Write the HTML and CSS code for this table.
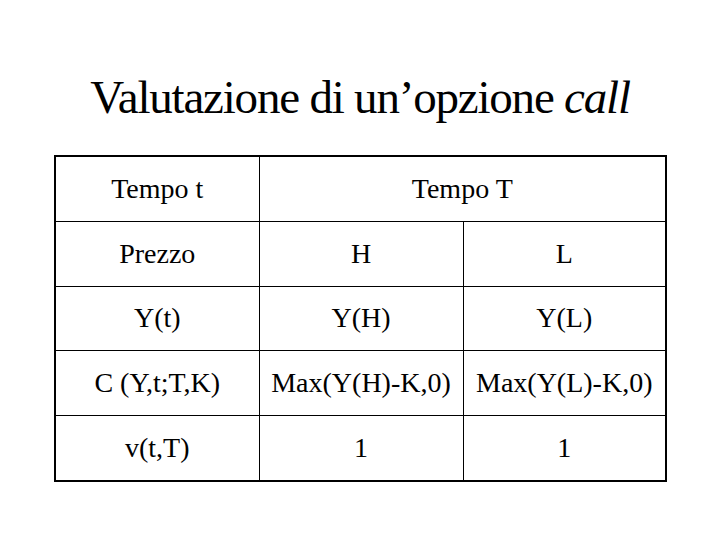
FILE: index.html
```html
<!DOCTYPE html>
<html lang="it">
<head>
<meta charset="utf-8">
<title>Valutazione di un’opzione call</title>
<link rel="stylesheet" href="styles.css">
</head>
<body>
<div class="slide">
  <h1 class="title">Valutazione di un’opzione <em>call</em></h1>
  <table class="grid">
    <colgroup>
      <col class="c1"><col class="c2"><col class="c3">
    </colgroup>
    <tr><td>Tempo t</td><td colspan="2">Tempo T</td></tr>
    <tr><td>Prezzo</td><td>H</td><td>L</td></tr>
    <tr><td>Y(t)</td><td>Y(H)</td><td>Y(L)</td></tr>
    <tr><td>C (Y,t;T,K)</td><td>Max(Y(H)-K,0)</td><td>Max(Y(L)-K,0)</td></tr>
    <tr><td>v(t,T)</td><td>1</td><td>1</td></tr>
  </table>
</div>
</body>
</html>
```
FILE: styles.css
```css
html, body {
  margin: 0;
  padding: 0;
  background: #ffffff;
}
body {
  width: 720px;
  height: 540px;
  overflow: hidden;
  font-family: "Liberation Serif", "Times New Roman", serif;
  color: #000000;
}
.slide {
  display: flex;
  flex-direction: column;
  align-items: flex-start;
  padding-top: 69px;
}
.title {
  align-self: stretch;
  margin: 0;
  height: 56px;
  line-height: 56px;
  font-size: 47px;
  font-weight: normal;
  text-align: center;
  letter-spacing: -1.2px;
}
.title em {
  font-style: italic;
}
.grid {
  margin: 30px 0 0 54px;
  border-collapse: collapse;
  border: 2px solid #000;
  width: 611px;
  table-layout: fixed;
  font-size: 28px;
}
.c1 { width: 204px; }
.c2 { width: 204px; }
.c3 { width: 203px; }
.grid td {
  border: 1px solid #000;
  height: 63.8px;
  padding: 0;
  text-align: center;
  vertical-align: middle;
  line-height: 32px;
}
```
